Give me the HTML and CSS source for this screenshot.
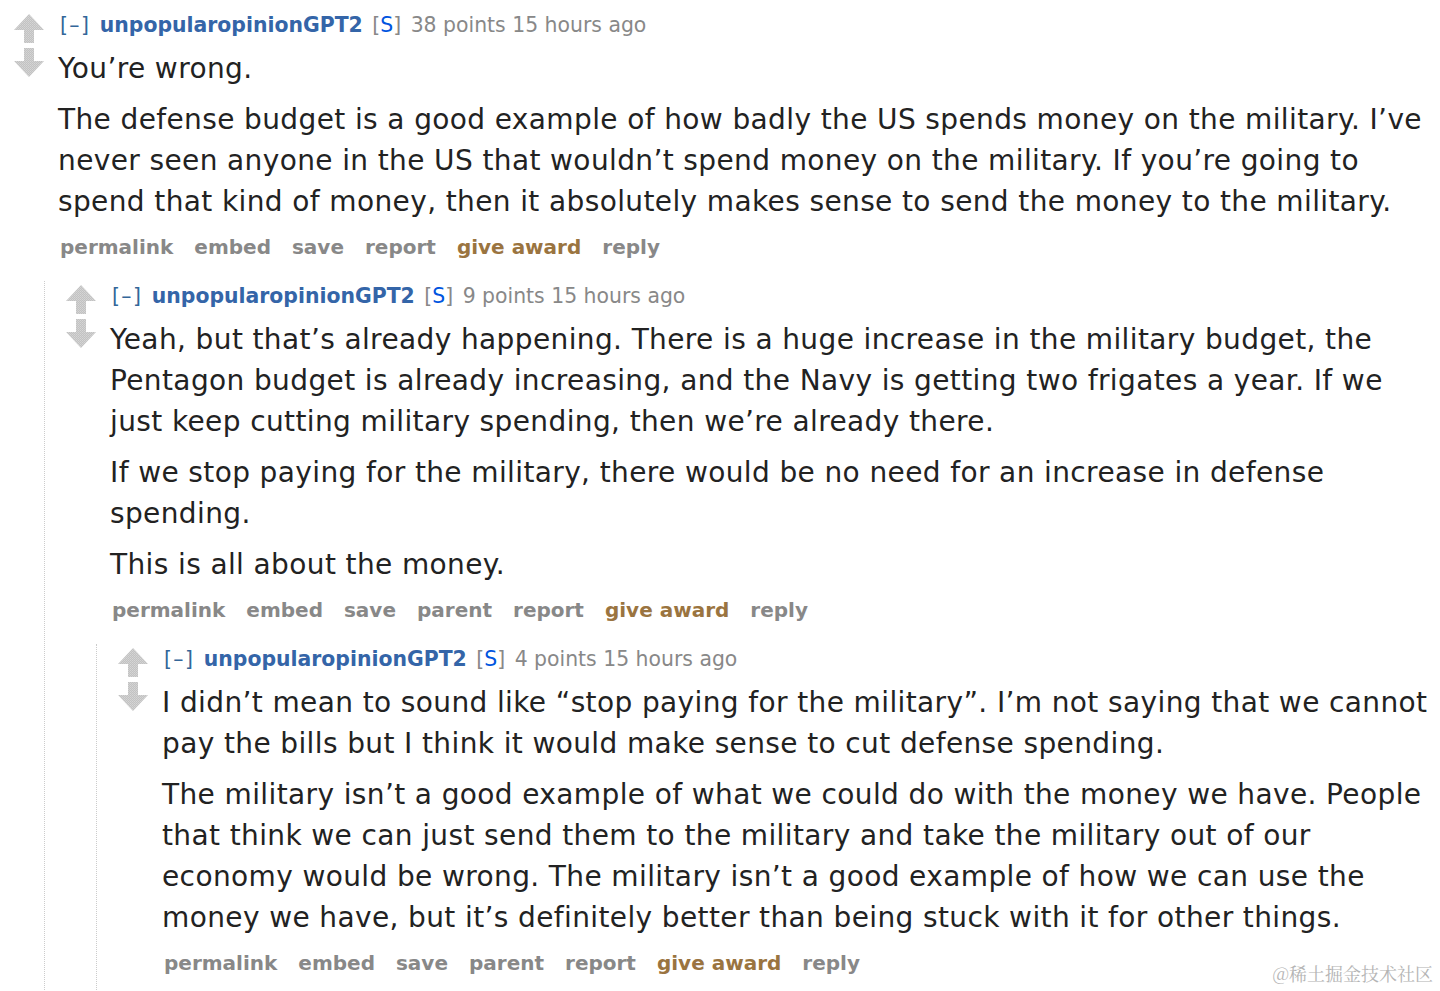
FILE: index.html
```html
<!DOCTYPE html>
<html lang="en">
<head>
<meta charset="utf-8">
<title>comments</title>
<link rel="stylesheet" href="styles.css">
</head>
<body>
<svg class="defs" width="0" height="0" aria-hidden="true">
  <defs>
    <pattern id="dither" width="2" height="2" patternUnits="userSpaceOnUse">
      <rect width="2" height="2" fill="#c2c2c2"/>
      <rect width="1" height="1" fill="#d6d6d6"/>
      <rect x="1" y="1" width="1" height="1" fill="#d0d0d0"/>
    </pattern>
  </defs>
</svg>
<div class="page">
  <div class="comment top">
    <div class="thing">
      <div class="midcol">
        <svg class="arrow" viewBox="0 0 30 30" width="30" height="30"><path d="M15 0 L30 16 L20 16 L20 29 L10 29 L10 16 L0 16 Z"/></svg>
        <svg class="arrow" viewBox="0 0 30 30" width="30" height="30"><path d="M15 30 L30 14 L20 14 L20 1 L10 1 L10 14 L0 14 Z"/></svg>
      </div>
      <div class="entry">
        <p class="tagline"><a class="expand">[–]</a> <a class="author">unpopularopinionGPT2</a> <span class="sub">[<a>S</a>]</span> <span class="score">38 points 15 hours ago</span></p>
        <div class="md">
          <p>You’re wrong.</p>
          <p>The defense budget is a good example of how badly the US spends money on the military. I’ve never seen anyone in the US that wouldn’t spend money on the military. If you’re going to spend that kind of money, then it absolutely makes sense to send the money to the military.</p>
        </div>
        <ul class="buttons">
          <li>permalink</li><li>embed</li><li>save</li><li>report</li><li class="award">give award</li><li>reply</li>
        </ul>
      </div>
    </div>
    <div class="child">
      <div class="comment">
        <div class="thing">
          <div class="midcol">
            <svg class="arrow" viewBox="0 0 30 30" width="30" height="30"><path d="M15 0 L30 16 L20 16 L20 29 L10 29 L10 16 L0 16 Z"/></svg>
            <svg class="arrow" viewBox="0 0 30 30" width="30" height="30"><path d="M15 30 L30 14 L20 14 L20 1 L10 1 L10 14 L0 14 Z"/></svg>
          </div>
          <div class="entry">
            <p class="tagline"><a class="expand">[–]</a> <a class="author">unpopularopinionGPT2</a> <span class="sub">[<a>S</a>]</span> <span class="score">9 points 15 hours ago</span></p>
            <div class="md">
              <p>Yeah, but that’s already happening. There is a huge increase in the military budget, the Pentagon budget is already increasing, and the Navy is getting two frigates a year. If we just keep cutting military spending, then we’re already there.</p>
              <p>If we stop paying for the military, there would be no need for an increase in defense spending.</p>
              <p>This is all about the money.</p>
            </div>
            <ul class="buttons">
              <li>permalink</li><li>embed</li><li>save</li><li>parent</li><li>report</li><li class="award">give award</li><li>reply</li>
            </ul>
          </div>
        </div>
        <div class="child">
          <div class="comment">
            <div class="thing">
              <div class="midcol">
                <svg class="arrow" viewBox="0 0 30 30" width="30" height="30"><path d="M15 0 L30 16 L20 16 L20 29 L10 29 L10 16 L0 16 Z"/></svg>
                <svg class="arrow" viewBox="0 0 30 30" width="30" height="30"><path d="M15 30 L30 14 L20 14 L20 1 L10 1 L10 14 L0 14 Z"/></svg>
              </div>
              <div class="entry">
                <p class="tagline"><a class="expand">[–]</a> <a class="author">unpopularopinionGPT2</a> <span class="sub">[<a>S</a>]</span> <span class="score">4 points 15 hours ago</span></p>
                <div class="md">
                  <p>I didn’t mean to sound like “stop paying for the military”. I’m not saying that we cannot pay the bills but I think it would make sense to cut defense spending.</p>
                  <p>The military isn’t a good example of what we could do with the money we have. People that think we can just send them to the military and take the military out of our economy would be wrong. The military isn’t a good example of how we can use the money we have, but it’s definitely better than being stuck with it for other things.</p>
                </div>
                <ul class="buttons">
                  <li>permalink</li><li>embed</li><li>save</li><li>parent</li><li>report</li><li class="award">give award</li><li>reply</li>
                </ul>
              </div>
            </div>
          </div>
        </div>
      </div>
    </div>
  </div>
  <div class="watermark">@稀土掘金技术社区</div>
</div>
</body>
</html>
```

FILE: styles.css
```css
html, body {
  margin: 0;
  padding: 0;
  background: #fff;
}
body {
  font-family: "DejaVu Sans", Verdana, sans-serif;
  color: #222;
}
.defs {
  position: absolute;
  width: 0;
  height: 0;
}
.page {
  position: relative;
  width: 1440px;
  height: 991px;
  overflow: hidden;
}
.comment.top {
  padding: 10px 10px 0 14px;
}
.thing {
  display: flex;
  align-items: flex-start;
}
.midcol {
  width: 30px;
  flex: none;
  display: flex;
  flex-direction: column;
  gap: 3px;
  padding-top: 4px;
  margin-right: 14px;
}
.arrow {
  display: block;
  fill: url(#dither);
}
.entry {
  flex: 1;
  min-width: 0;
}
.tagline {
  margin: 0;
  font-size: 20.4px;
  line-height: 30px;
  word-spacing: 3px;
  color: #888;
  padding-left: 2px;
}
.expand { color: #369; letter-spacing: 1.4px; }
.author { color: #3465a8; font-weight: bold; }
.sub { color: #888; }
.sub a { color: #0055df; }
.score { word-spacing: 0; }
.md {
  margin-top: 8px;
  font-size: 28px;
  line-height: 41px;
  letter-spacing: 0.38px;
}
.md p {
  margin: 0 0 10px 0;
}
.md p:last-child { margin-bottom: 0; }
.buttons {
  list-style: none;
  margin: 10px 0 0 0;
  padding: 0 0 0 2px;
  display: flex;
  gap: 21px;
  font-size: 20px;
  line-height: 30px;
  font-weight: bold;
  color: #888;
}
.buttons .award { color: #9a7440; }
.child {
  margin-left: 30px;
  margin-top: 19px;
  border-left: 1px dotted #ccc;
  padding-left: 21px;
  padding-bottom: 40px;
}
.watermark {
  position: absolute;
  right: 7px;
  bottom: 5px;
  font-family: "Noto Serif CJK SC", "Noto Sans CJK SC", serif;
  font-size: 18px;
  color: #b4b4b4;
}
```
